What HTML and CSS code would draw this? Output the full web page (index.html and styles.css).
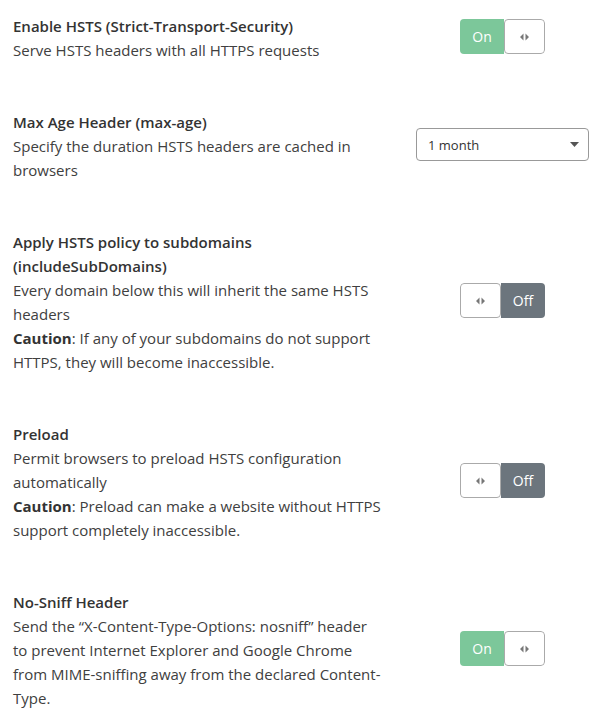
FILE: index.html
```html
<!DOCTYPE html>
<html lang="en">
<head>
    <meta charset="UTF-8">
    <meta name="viewport" content="width=device-width, initial-scale=1.0">
    <title>HSTS Settings</title>
    <link rel="stylesheet" href="styles.css">
</head>
<body>
    <div class="settings">
        <div class="setting-row">
            <div class="setting-text">
                <div class="setting-title">Enable HSTS (Strict-Transport-Security)</div>
                <div>Serve HSTS headers with all HTTPS requests</div>
            </div>
            <div class="setting-control">
                <div class="toggle on">
                    <span class="toggle-label">On</span>
                    <span class="toggle-handle">
                        <svg width="9" height="8" viewBox="0 0 9 8"><path d="M3.5 0.5 L0 4 L3.5 7.5 Z M5.5 0.5 L9 4 L5.5 7.5 Z" fill="#777"/></svg>
                    </span>
                </div>
            </div>
        </div>

        <div class="setting-row">
            <div class="setting-text">
                <div class="setting-title">Max Age Header (max-age)</div>
                <div>Specify the duration HSTS headers are cached in browsers</div>
            </div>
            <div class="setting-control">
                <div class="select">
                    <span>1 month</span>
                    <svg width="9" height="5" viewBox="0 0 9 5"><path d="M0 0 L9 0 L4.5 5 Z" fill="#555"/></svg>
                </div>
            </div>
        </div>

        <div class="setting-row">
            <div class="setting-text">
                <div class="setting-title">Apply HSTS policy to subdomains (includeSubDomains)</div>
                <div>Every domain below this will inherit the same HSTS headers</div>
                <div><b>Caution</b>: If any of your subdomains do not support HTTPS, they will become inaccessible.</div>
            </div>
            <div class="setting-control">
                <div class="toggle off">
                    <span class="toggle-handle">
                        <svg width="9" height="8" viewBox="0 0 9 8"><path d="M3.5 0.5 L0 4 L3.5 7.5 Z M5.5 0.5 L9 4 L5.5 7.5 Z" fill="#777"/></svg>
                    </span>
                    <span class="toggle-label">Off</span>
                </div>
            </div>
        </div>

        <div class="setting-row">
            <div class="setting-text">
                <div class="setting-title">Preload</div>
                <div>Permit browsers to preload HSTS configuration automatically</div>
                <div><b>Caution</b>: Preload can make a website without HTTPS support completely inaccessible.</div>
            </div>
            <div class="setting-control">
                <div class="toggle off">
                    <span class="toggle-handle">
                        <svg width="9" height="8" viewBox="0 0 9 8"><path d="M3.5 0.5 L0 4 L3.5 7.5 Z M5.5 0.5 L9 4 L5.5 7.5 Z" fill="#777"/></svg>
                    </span>
                    <span class="toggle-label">Off</span>
                </div>
            </div>
        </div>

        <div class="setting-row">
            <div class="setting-text">
                <div class="setting-title">No-Sniff Header</div>
                <div>Send the &ldquo;X-Content-Type-Options: nosniff&rdquo; header to prevent Internet Explorer and Google Chrome from MIME-sniffing away from the declared Content-Type.</div>
            </div>
            <div class="setting-control">
                <div class="toggle on">
                    <span class="toggle-label">On</span>
                    <span class="toggle-handle">
                        <svg width="9" height="8" viewBox="0 0 9 8"><path d="M3.5 0.5 L0 4 L3.5 7.5 Z M5.5 0.5 L9 4 L5.5 7.5 Z" fill="#777"/></svg>
                    </span>
                </div>
            </div>
        </div>
    </div>
</body>
</html>
```

FILE: styles.css
```css
body {
    margin: 0;
    background-color: #fff;
    font-family: "Open Sans", sans-serif;
    font-size: 15px;
    line-height: 24px;
    color: #404040;
}
.settings {
    padding: 14px 9px 0 13px;
}
.setting-row {
    display: flex;
    align-items: center;
    margin-bottom: 48px;
}
.setting-row:last-child {
    margin-bottom: 0;
}
.setting-text {
    width: 370px;
}
.setting-title {
    font-weight: 600;
    color: #333;
}
.setting-text b {
    font-weight: 700;
    color: #333;
}
.setting-control {
    width: 173px;
    margin-left: auto;
    display: flex;
    justify-content: center;
    margin-top: -3px;
}
.toggle {
    display: flex;
    width: 85px;
    height: 35px;
    border-radius: 4px;
    overflow: hidden;
    box-sizing: border-box;
}
.toggle-label {
    width: 44px;
    display: flex;
    align-items: center;
    justify-content: center;
    color: #fff;
    font-size: 14px;
}
.toggle.on .toggle-label {
    background-color: #7cc79a;
}
.toggle.off .toggle-label {
    background-color: #6c757d;
}
.toggle-handle {
    flex: 1;
    display: flex;
    align-items: center;
    justify-content: center;
    background: #fff;
    border: 1px solid #aaa;
    border-radius: 4px;
}
.select {
    width: 173px;
    height: 33px;
    box-sizing: border-box;
    border: 1px solid #999;
    border-radius: 4px;
    display: flex;
    align-items: center;
    justify-content: space-between;
    padding: 0 9px 0 11px;
    font-size: 13px;
    color: #333;
}
```
